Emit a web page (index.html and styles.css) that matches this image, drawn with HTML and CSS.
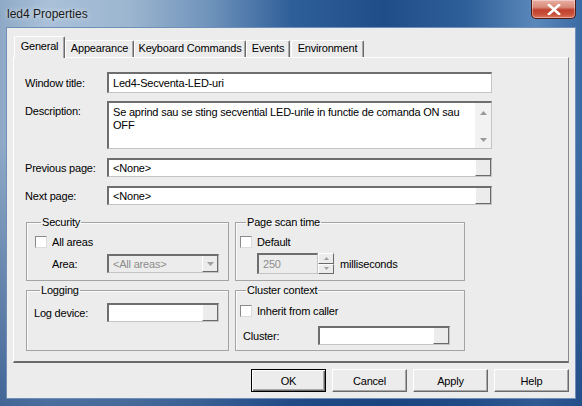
FILE: index.html
```
<!DOCTYPE html>
<html>
<head>
<meta charset="utf-8">
<link rel="stylesheet" href="styles.css">
</head>
<body>
<div class="window">
  <div class="titlebar">
    <span class="title">led4 Properties</span>
    <div class="close">
      <svg width="14" height="11" viewBox="0 0 14 11"><path d="M2 1 L12 10 M12 1 L2 10" stroke="#fff" stroke-width="2.6" stroke-linecap="square"/></svg>
    </div>
  </div>
  <div class="client">
    <div class="tabs">
      <div class="tab active t-general">General</div>
      <div class="tab t-appearance">Appearance</div>
      <div class="tab t-keyboard">Keyboard Commands</div>
      <div class="tab t-events">Events</div>
      <div class="tab t-env">Environment</div>
    </div>
    <div class="panel">
      <div class="row r-title">
        <span class="label">Window title:</span>
        <div class="edit">Led4-Secventa-LED-uri</div>
      </div>
      <div class="row r-desc">
        <span class="label">Description:</span>
        <div class="edit memo">
          <div class="memo-text">Se aprind sau se sting secvential LED-urile in functie de comanda ON sau OFF</div>
          <div class="vscroll">
            <svg width="7" height="4" viewBox="0 0 7 4"><path d="M0 4 L3.5 0 L7 4 Z" fill="#9a9a9a"/></svg>
            <svg width="7" height="4" viewBox="0 0 7 4"><path d="M0 0 L3.5 4 L7 0 Z" fill="#9a9a9a"/></svg>
          </div>
        </div>
      </div>
      <div class="row r-combo">
        <span class="label">Previous page:</span>
        <div class="edit combo"><span class="combo-text">&lt;None&gt;</span><span class="combo-btn"></span></div>
      </div>
      <div class="row r-combo r-last">
        <span class="label">Next page:</span>
        <div class="edit combo"><span class="combo-text">&lt;None&gt;</span><span class="combo-btn"></span></div>
      </div>
      <div class="groups">
        <fieldset class="group g-security">
          <legend>Security</legend>
          <div class="check-row"><span class="check"></span><span>All areas</span></div>
          <div class="field-row area-row">
            <span class="flabel w-area">Area:</span>
            <div class="edit combo disabled w-areacombo"><span class="combo-text">&lt;All areas&gt;</span><span class="combo-btn arrow"><svg width="7" height="4" viewBox="0 0 7 4"><path d="M0 0 L3.5 4 L7 0 Z" fill="#a0a0a0"/></svg></span></div>
          </div>
        </fieldset>
        <fieldset class="group g-scan">
          <legend>Page scan time</legend>
          <div class="check-row"><span class="check"></span><span>Default</span></div>
          <div class="field-row spin-row">
            <div class="edit disabled spin-edit">250</div>
            <div class="spin">
              <span class="spin-btn"><svg width="5" height="3" viewBox="0 0 5 3"><path d="M0 3 L2.5 0 L5 3 Z" fill="#a0a0a0"/></svg></span>
              <span class="spin-btn"><svg width="5" height="3" viewBox="0 0 5 3"><path d="M0 0 L2.5 3 L5 0 Z" fill="#a0a0a0"/></svg></span>
            </div>
            <span class="unit">milliseconds</span>
          </div>
        </fieldset>
        <fieldset class="group g-logging">
          <legend>Logging</legend>
          <div class="field-row">
            <span class="flabel w-log">Log device:</span>
            <div class="edit combo w-areacombo"><span class="combo-text"></span><span class="combo-btn"></span></div>
          </div>
        </fieldset>
        <fieldset class="group g-cluster">
          <legend>Cluster context</legend>
          <div class="check-row"><span class="check"></span><span>Inherit from caller</span></div>
          <div class="field-row cluster-row">
            <span class="flabel w-cluster">Cluster:</span>
            <div class="edit combo w-clustercombo"><span class="combo-text"></span><span class="combo-btn"></span></div>
          </div>
        </fieldset>
      </div>
    </div>
    <div class="buttons">
      <div class="btn default">OK</div>
      <div class="btn">Cancel</div>
      <div class="btn">Apply</div>
      <div class="btn">Help</div>
    </div>
  </div>
</div>
</body>
</html>
```
FILE: styles.css
```
* { box-sizing: border-box; }
html, body { margin: 0; padding: 0; }
body {
  width: 582px;
  height: 406px;
  overflow: hidden;
  font-family: "Liberation Sans", Arial, sans-serif;
  font-size: 11px;
  letter-spacing: -0.2px;
  color: #000;
}
.window {
  width: 582px;
  height: 406px;
  display: flex;
  flex-direction: column;
  padding: 0 7px 8px 7px;
  background:
    linear-gradient(180deg, rgba(255,255,255,0) 35%, rgba(24,64,124,0.65) 100%),
    linear-gradient(90deg, #8ea9c6 0%, #a9c0d8 8%, #9db6d0 22%, #6f93bb 36%, #2f5f99 50%, #1f4d88 66%, #2f5f98 80%, #5a88bb 92%, #3a6aa3 100%);
}
.titlebar {
  height: 28px;
  display: flex;
  align-items: flex-start;
  justify-content: space-between;
  margin-right: -1px;
}
.title {
  font-size: 12px;
  line-height: 14px;
  margin-top: 7px;
  letter-spacing: 0;
  color: #1a1a1a;
  text-shadow: 0 0 5px rgba(255,255,255,0.85);
}
.close {
  width: 45px;
  height: 19px;
  border: 1px solid #4d1c16;
  border-top: none;
  border-radius: 0 0 5px 5px;
  background: linear-gradient(180deg, #e9b0a4 0%, #d88a78 40%, #c0402e 55%, #c8503b 80%, #e07a60 100%);
  display: flex;
  align-items: center;
  justify-content: center;
  box-shadow: inset 0 0 0 1px rgba(255,255,255,0.35);
}
.client {
  flex: 1;
  background: #ececec;
  display: flex;
  flex-direction: column;
  box-shadow: 0 0 0 1px #6d8fb8;
}
.tabs {
  height: 29px;
  display: flex;
  align-items: flex-end;
  padding-left: 7px;
}
.tab {
  height: 17px;
  line-height: 15px;
  text-align: center;
  white-space: nowrap;
  border-top: 1px solid #fff;
  border-left: 1px solid #fff;
  border-right: 1px solid #6a6a6a;
  box-shadow: inset -1px 0 0 #a8a8a8;
  border-radius: 2px 2px 0 0;
  background: #ececec;
}
.tab.active {
  height: 22px;
  line-height: 19px;
  margin-bottom: -1px;
  position: relative;
  z-index: 1;
}
.t-general { width: 51px; }
.t-appearance { width: 69px; }
.t-keyboard { width: 112px; }
.t-events { width: 44px; }
.t-env { width: 73px; margin-left: 1px; }
.panel {
  margin-left: 6px;
  width: 556px;
  height: 306px;
  border-top: 1px solid #fff;
  border-left: 1px solid #fff;
  border-right: 1px solid #8a8a8a;
  border-bottom: 2px solid #6a6a6a;
  padding: 14px 0 0 11px;
  display: flex;
  flex-direction: column;
}
.row {
  display: flex;
  align-items: center;
}
.label { width: 82px; flex: none; }
.r-title { height: 21px; margin-bottom: 8px; }
.r-title .edit { height: 21px; }
.r-desc { height: 48px; margin-bottom: 9px; align-items: flex-start; }
.r-desc .label { margin-top: 4px; }
.r-combo { height: 19px; margin-bottom: 9px; }
.r-combo.r-last { margin-bottom: 0; }
.edit {
  width: 385px;
  background: #fff;
  border-style: solid;
  border-width: 2px 1px 1px 2px;
  border-color: #6e6e6e #c4c4c4 #c4c4c4 #6e6e6e;
  padding-left: 4px;
  display: flex;
  align-items: center;
  white-space: nowrap;
  overflow: hidden;
}
.memo {
  height: 48px;
  align-items: stretch;
  padding: 0;
}
.memo-text {
  flex: 1;
  white-space: normal;
  padding: 3px 0 0 4px;
  line-height: 13px;
  width: 0;
}
.vscroll {
  width: 16px;
  flex: none;
  background: #f2f2f2;
  display: flex;
  flex-direction: column;
  justify-content: space-between;
  align-items: center;
  padding: 8px 0 6px;
}
.combo { height: 19px; padding-right: 0; }
.combo-text { flex: 1; }
.combo-btn {
  width: 16px;
  height: 100%;
  flex: none;
  background: #ececec;
  border-left: 1px solid #fff;
  border-right: 1px solid #6a6a6a;
  border-bottom: 1px solid #6a6a6a;
  display: flex;
  align-items: center;
  justify-content: center;
}
.edit.disabled { background: #ececec; color: #8c8c8c; }
.groups {
  margin-top: 11px;
  margin-left: 1px;
  display: grid;
  grid-template-columns: 203px 230px;
  grid-template-rows: 65px 67px;
  column-gap: 6px;
  row-gap: 3px;
}
.group {
  margin: 0;
  min-width: 0;
  border: 1px solid #a4a4a4;
  box-shadow: inset 1px 1px 0 #fafafa;
  padding: 6px 0 0 8px;
}
.group legend {
  padding: 0 1px;
  margin-left: 6px;
  line-height: 13px;
  font-size: 11px;
}
.g-scan { padding-left: 4px; }
.g-logging { padding-left: 7px; }
.g-cluster { padding-left: 4px; padding-top: 7px; }
.check-row {
  height: 13px;
  display: flex;
  align-items: center;
}
.check {
  width: 12px;
  height: 12px;
  margin-right: 5px;
  background: #fff;
  border: 1px solid;
  border-color: #8a8a8a #dcdcdc #dcdcdc #8a8a8a;
  flex: none;
}
.field-row { display: flex; align-items: center; }
.area-row { margin-top: 6px; margin-left: 17px; }
.w-area { width: 55px; }
.w-log { width: 73px; }
.w-areacombo { width: 112px; }
.cluster-row { margin-top: 9px; margin-left: 3px; }
.w-cluster { width: 75px; }
.w-clustercombo { width: 132px; }
.spin-row { margin-top: 5px; margin-left: 17px; height: 21px; }
.spin-edit { width: 61px; height: 21px; }
.spin {
  width: 16px;
  height: 21px;
  display: flex;
  flex-direction: column;
}
.spin-btn {
  flex: 1;
  background: #ececec;
  border: 1px solid;
  border-color: #fff #6a6a6a #6a6a6a #fff;
  display: flex;
  align-items: center;
  justify-content: center;
}
.unit { margin-left: 6px; }
.buttons {
  display: flex;
  justify-content: flex-end;
  gap: 6px;
  margin-top: 6px;
  padding-right: 6px;
}
.btn {
  width: 75px;
  height: 23px;
  display: flex;
  align-items: center;
  justify-content: center;
  background: #ececec;
  border: 1px solid;
  border-color: #fff #6a6a6a #6a6a6a #fff;
  box-shadow: inset -1px -1px 0 #a8a8a8;
}
.btn.default {
  border-color: #000;
  box-shadow: inset 1px 1px 0 #fff, inset -1px -1px 0 #6a6a6a, inset -2px -2px 0 #a8a8a8;
}
```
